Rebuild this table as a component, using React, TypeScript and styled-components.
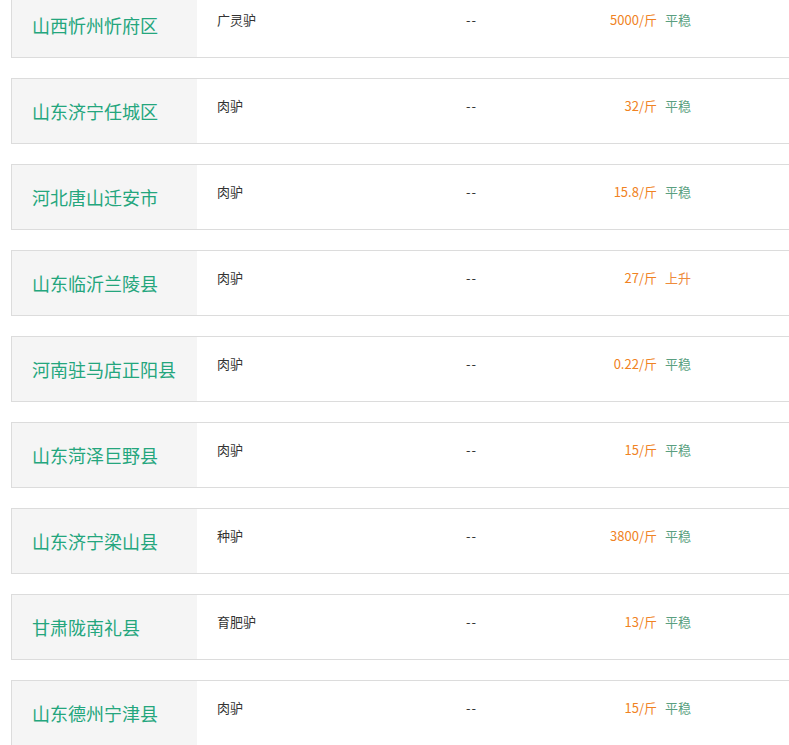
import * as React from "react";
import styled, { createGlobalStyle } from "styled-components";

const GlobalStyle = createGlobalStyle`
	html, body {
		margin: 0;
		padding: 0;
		background: #fff;
		overflow: hidden;
	}
	body {
		font-family: "Microsoft YaHei", "Noto Sans CJK SC", "Noto Sans", sans-serif;
	}
`;

const List = styled.ul`
	list-style: none;
	margin: -8px 0 0 0;
	padding: 0 0 0 11px;
	box-sizing: border-box;
	width: 100%;
`;

const Card = styled.li`
	display: flex;
	align-items: stretch;
	height: 64px;
	margin-bottom: 20px;
	border: 1px solid #dcdcdc;
	border-right: none;
	overflow: hidden;
`;

const Name = styled.div`
	flex: 0 0 185px;
	display: flex;
	align-items: center;
	padding-left: 20px;
	box-sizing: border-box;
	background: #f5f5f5;
	color: #24a67d;
	font-size: 18px;
	white-space: nowrap;
`;

const Cell = styled.div<{ $width?: number; $pad?: number; $align?: string }>`
	flex: 0 0 ${p => (p.$width ? `${p.$width}px` : "auto")};
	box-sizing: border-box;
	padding-left: ${p => p.$pad ?? 0}px;
	padding-top: 18px;
	text-align: ${p => p.$align ?? "left"};
	font-size: 13px;
	line-height: 18px;
	color: #333;
	white-space: nowrap;
`;

const Dash = styled.span`
	letter-spacing: 1px;
`;

const Price = styled.span`
	color: #f08223;
`;

const Trend = styled.span<{ $up?: boolean }>`
	color: ${p => (p.$up ? "#ee8b3c" : "#5a9f80")};
`;

type Row = {
	area: string;
	kind: string;
	price: string;
	trend: string;
};

const rows: Row[] = [
	{ area: "山西忻州忻府区", kind: "广灵驴", price: "5000/斤", trend: "平稳" },
	{ area: "山东济宁任城区", kind: "肉驴", price: "32/斤", trend: "平稳" },
	{ area: "河北唐山迁安市", kind: "肉驴", price: "15.8/斤", trend: "平稳" },
	{ area: "山东临沂兰陵县", kind: "肉驴", price: "27/斤", trend: "上升" },
	{ area: "河南驻马店正阳县", kind: "肉驴", price: "0.22/斤", trend: "平稳" },
	{ area: "山东菏泽巨野县", kind: "肉驴", price: "15/斤", trend: "平稳" },
	{ area: "山东济宁梁山县", kind: "种驴", price: "3800/斤", trend: "平稳" },
	{ area: "甘肃陇南礼县", kind: "育肥驴", price: "13/斤", trend: "平稳" },
	{ area: "山东德州宁津县", kind: "肉驴", price: "15/斤", trend: "平稳" },
];

export default function App() {
	return (
		<>
			<GlobalStyle />
			<List>
				{rows.map(row => (
					<Card key={row.area}>
						<Name>{row.area}</Name>
						<Cell $width={250} $pad={20}>{row.kind}</Cell>
						<Cell $width={130} $pad={19}><Dash>--</Dash></Cell>
						<Cell $width={80} $align="right">
							<Price>{row.price}</Price>
						</Cell>
						<Cell $pad={8}>
							<Trend $up={row.trend === "上升"}>{row.trend}</Trend>
						</Cell>
					</Card>
				))}
			</List>
		</>
	);
}
